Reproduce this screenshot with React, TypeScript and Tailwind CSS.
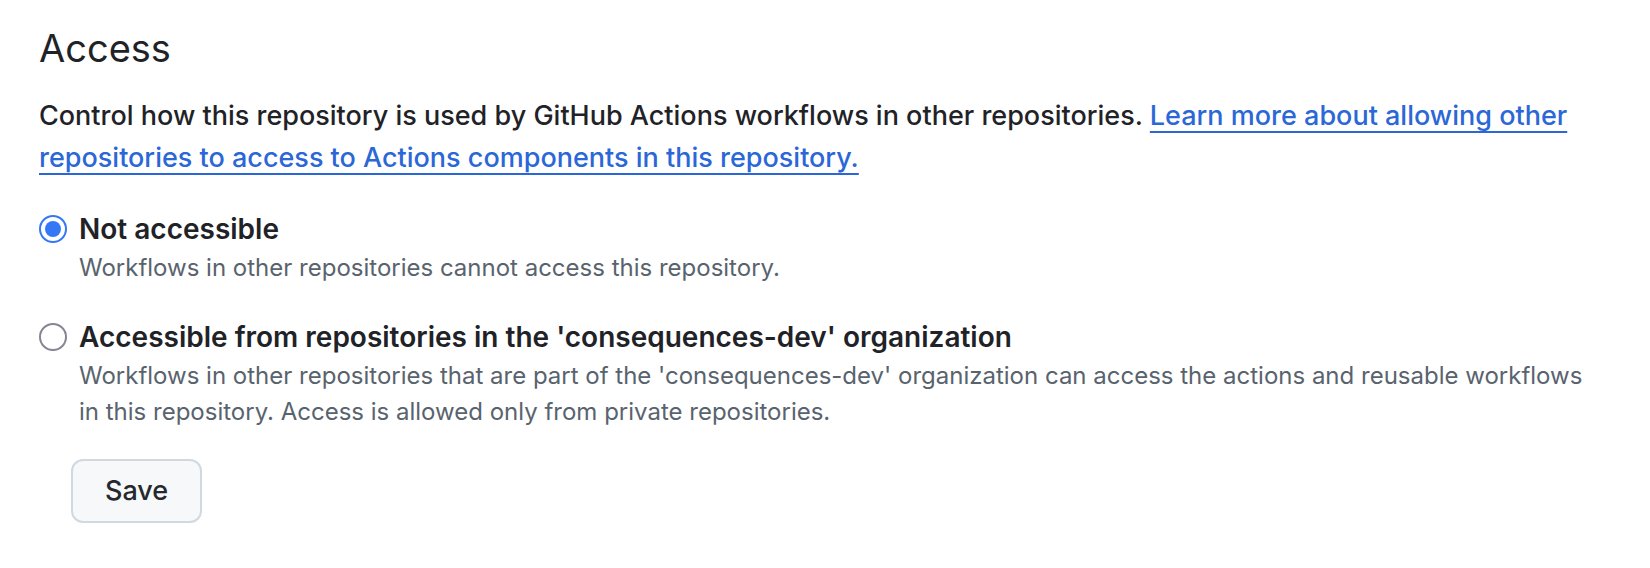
import React from "react";

type Option = { id: string; title: string; description: string };

const options: Option[] = [
  {
    id: "none",
    title: "Not accessible",
    description: "Workflows in other repositories cannot access this repository.",
  },
  {
    id: "organization",
    title: "Accessible from repositories in the 'consequences-dev' organization",
    description:
      "Workflows in other repositories that are part of the 'consequences-dev' organization can access the actions and reusable workflows in this repository. Access is allowed only from private repositories.",
  },
];

export default function App() {
  return (
    <main className="bg-white pt-6 pr-14 pb-11 pl-[39px] font-['Inter',sans-serif] text-[#1f2328]">
      <h2 className="text-[38px] leading-12 font-normal">Access</h2>
      <p className="mt-[23px] text-[27px] leading-[42px] font-medium">
        Control how this repository is used by GitHub Actions workflows in other repositories.{" "}
        <a href="#learn" className="text-[#2b67d6] underline decoration-2 underline-offset-[6px]">
          Learn more about allowing other repositories to access to Actions components in this repository.
        </a>
      </p>
      <form className="mt-[29px]" onSubmit={(e) => e.preventDefault()}>
        <div className="flex flex-col gap-[30px]">
          {options.map((o, i) => (
            <div key={o.id} className="flex gap-3">
              <input
                type="radio"
                name="access"
                id={o.id}
                defaultChecked={i === 0}
                aria-describedby={`${o.id}-note`}
                className="mt-[7px] size-7 shrink-0 appearance-none rounded-full border-2 border-[#868593] bg-white checked:border-[#3478f6] checked:bg-[#3478f6] checked:bg-clip-content checked:p-1"
              />
              <div>
                <label htmlFor={o.id} className="block text-[28px] leading-[42px] font-semibold">
                  {o.title}
                </label>
                <p id={`${o.id}-note`} className="text-[24px] leading-9 text-[#59636e]">
                  {o.description}
                </p>
              </div>
            </div>
          ))}
        </div>
        <button
          type="submit"
          className="mt-[29px] ml-8 h-16 rounded-xl border-2 border-[#d1d9e0] bg-[#f6f8fa] px-8 text-[27px] font-medium text-[#25292e]"
        >
          Save
        </button>
      </form>
    </main>
  );
}
